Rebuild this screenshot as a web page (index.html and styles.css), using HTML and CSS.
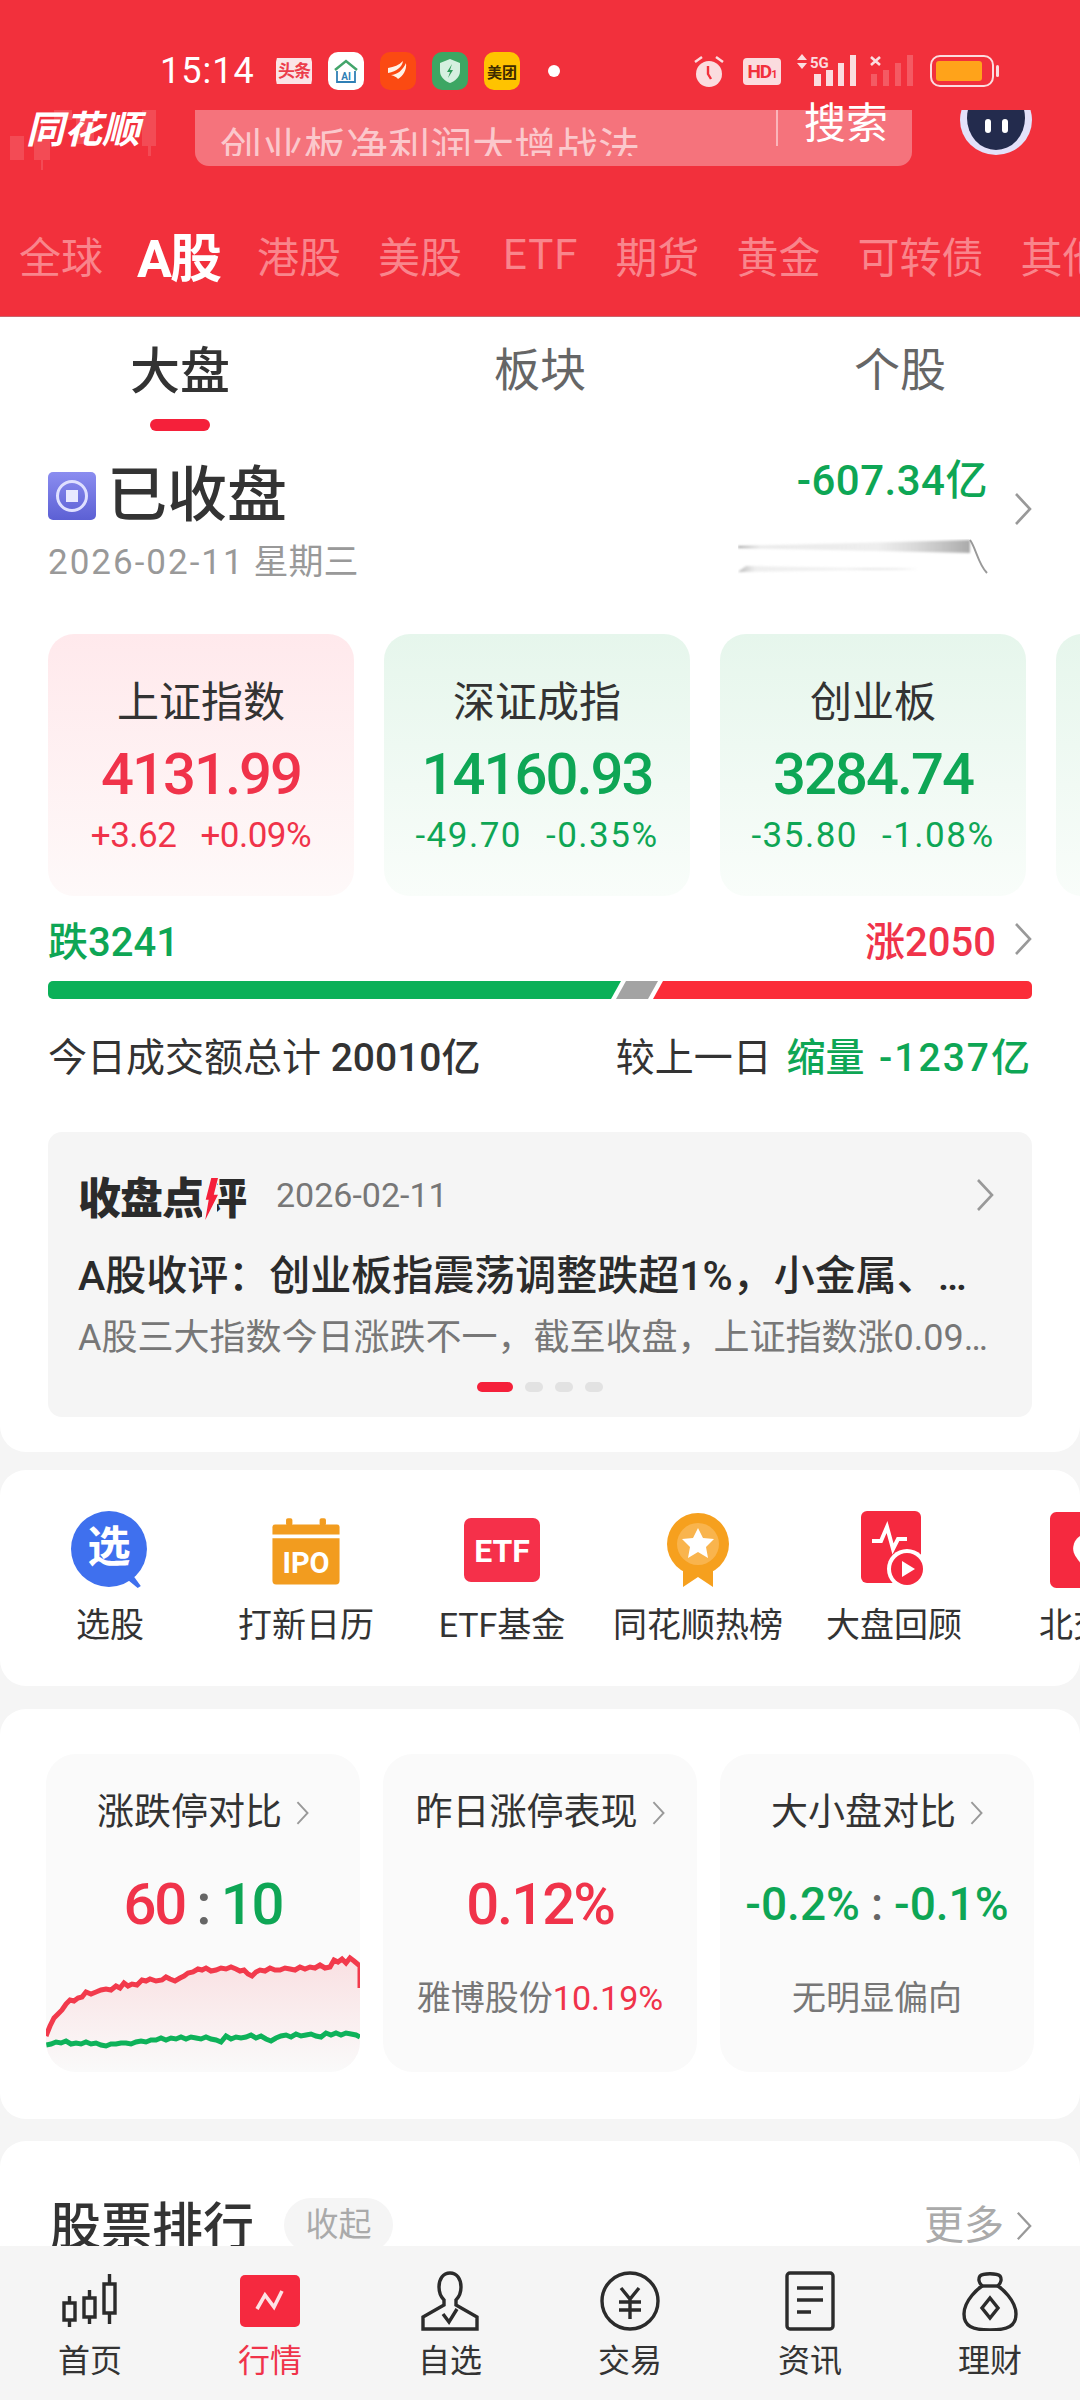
FILE: index.html
```html
<!DOCTYPE html>
<html lang="zh-CN">
<head>
  <meta charset="UTF-8">
  <meta name="viewport" content="width=device-width, initial-scale=1">
  <title>同花顺 行情</title>
  <link rel="stylesheet" href="styles.css">
</head>
<body>

<div class="content">

  <header class="header">
    <div class="status">
      <span class="time">15:14</span>
      <div class="apps">
        <span class="app app-toutiao"><i>头条</i></span>
        <span class="app app-home">
          <svg viewBox="0 0 36 36"><path d="M7 17 18 8l11 9" fill="none" stroke="#43a56b" stroke-width="2.5"/><path d="M9 18v11h18V18" fill="none" stroke="#2f7fb5" stroke-width="1.8"/><text x="18" y="27" text-anchor="middle" class="app-ai">AI</text></svg>
        </span>
        <span class="app app-flag">
          <svg viewBox="0 0 36 36"><path d="M8 15c6-1 11-3 15-7-1 6-6 10-15 12zM11 22c6 0 12-5 15-12 1 7-3 13-8 16-1-2-4-3-7-4z" fill="#fff2e6"/></svg>
        </span>
        <span class="app app-shield">
          <svg viewBox="0 0 36 36"><path d="M18 6l10 4v8c0 6-5 10-10 12-5-2-10-6-10-12v-8z" fill="#d5f0e0"/><path d="M20 11l-5 8h3l-2 6 5-8h-3z" fill="#2f9a58"/></svg>
        </span>
        <span class="app app-meituan"><i>美团</i></span>
      </div>
      <span class="dot"></span>
      <div class="sys">
        <svg class="alarm" viewBox="0 0 32 34"><path d="M2 8l7-5M30 8l-7-5" stroke="#fbdcdf" stroke-width="2.5"/><circle cx="16" cy="20" r="13" fill="#fbdcdf"/><path d="M15 12v8l3 5" fill="none" stroke="#f2303c" stroke-width="2.4"/></svg>
        <span class="hd">HD<small>1</small></span>
        <svg class="net" viewBox="0 0 60 34"><path d="M5 0l5 6H0zM5 15l5-6H0z" fill="#fbdcdf"/><rect x="17" y="20" width="7" height="12" fill="#fbdcdf"/><rect x="29" y="16" width="7" height="16" fill="#fbdcdf"/><rect x="41" y="9" width="6" height="23" fill="#fbdcdf"/><rect x="53" y="1" width="6" height="31" fill="#fbdcdf"/><text x="13" y="14" class="net-5g">5G</text></svg>
        <svg class="net2" viewBox="0 0 44 34"><path d="M1 3l9 8M10 3l-9 8" stroke="#fbdcdf" stroke-width="2.6"/><g fill="#fff" opacity=".2"><rect x="1" y="20" width="6" height="12"/><rect x="13" y="16" width="6" height="16"/><rect x="25" y="9" width="6" height="23"/><rect x="37" y="1" width="6" height="31"/></g></svg>
        <span class="battery"><b></b></span>
      </div>
    </div>

    <div class="search-row">
      <svg class="candles" viewBox="0 0 170 60"><g fill="#fff" opacity=".13"><rect x="10" y="26" width="14" height="24"/><rect x="34" y="20" width="16" height="30"/><rect x="41" y="10" width="2" height="50"/><rect x="54" y="0" width="18" height="10"/><rect x="76" y="4" width="18" height="30"/><rect x="142" y="0" width="14" height="36"/><rect x="148" y="0" width="3" height="46"/></g></svg>
      <span class="logo">同花顺</span>
      <div class="search">
        <span class="search-text">创业板净利润大增战法</span>
        <span class="search-btn">搜索</span>
      </div>
      <svg class="robot" viewBox="0 0 72 46"><ellipse cx="36" cy="10" rx="36" ry="35" fill="#e3e1fa"/><ellipse cx="36" cy="8" rx="29" ry="32" fill="#232b4d"/><rect x="25" y="9" width="6" height="14" rx="3" fill="#fff"/><rect x="42" y="9" width="6" height="14" rx="3" fill="#fff"/></svg>
    </div>

    <nav class="market-tabs">
      <span>全球</span>
      <span class="active">A股</span>
      <span>港股</span>
      <span>美股</span>
      <span class="latin">ETF</span>
      <span>期货</span>
      <span>黄金</span>
      <span>可转债</span>
      <span>其他</span>
    </nav>
  </header>

  <section class="panel panel-market">
    <div class="sub-tabs">
      <span class="sub-tab active">大盘</span>
      <span class="sub-tab">板块</span>
      <span class="sub-tab">个股</span>
    </div>

    <div class="close-row">
      <div>
        <div class="close-state">
          <span class="state-icon"><i></i></span>
          <span>已收盘</span>
        </div>
        <div class="close-date"><span class="date-num">2026-02-11</span> 星期三</div>
      </div>
      <div class="flow">
        <div class="flow-value">-607.34亿</div>
        <svg class="spark" viewBox="0 0 250 36">
          <defs>
            <linearGradient id="sparkFill"><stop offset="0" stop-color="#888" stop-opacity=".8"/><stop offset=".1" stop-color="#ccc" stop-opacity=".4"/><stop offset=".6" stop-color="#ddd" stop-opacity=".5"/><stop offset="1" stop-color="#aaa"/></linearGradient>
            <filter id="sparkBlur"><feGaussianBlur stdDeviation="1"/></filter>
          </defs>
          <g filter="url(#sparkBlur)">
            <path d="M0 7 232 1v13L0 9z" fill="url(#sparkFill)"/>
            <path d="M0 33 8 27 180 30 0 33z" fill="url(#sparkFill)" opacity=".8"/>
          </g>
          <path d="M232 1c6 8 8 24 17 33" fill="none" stroke="#999" stroke-width="2"/>
        </svg>
        <svg class="chev flow-chev" viewBox="0 0 18 34"><path d="M2 2l14 15L2 32"/></svg>
      </div>
    </div>

    <div class="index-cards">
      <div class="index-card up">
        <div class="index-name">上证指数</div>
        <div class="index-value">4131.99</div>
        <div class="index-change"><span>+3.62</span><span>+0.09%</span></div>
      </div>
      <div class="index-card down">
        <div class="index-name">深证成指</div>
        <div class="index-value">14160.93</div>
        <div class="index-change"><span>-49.70</span><span>-0.35%</span></div>
      </div>
      <div class="index-card down">
        <div class="index-name">创业板</div>
        <div class="index-value">3284.74</div>
        <div class="index-change"><span>-35.80</span><span>-1.08%</span></div>
      </div>
      <div class="index-card down"></div>
    </div>

    <div class="breadth">
      <span class="green">跌3241</span>
      <span class="breadth-right">
        <span class="red">涨2050</span>
        <svg class="chev" viewBox="0 0 18 34"><path d="M2 2l14 15L2 32"/></svg>
      </span>
    </div>
    <div class="breadth-bar">
      <span class="bar-down"></span>
      <span class="bar-flat"></span>
      <span class="bar-up"></span>
    </div>

    <div class="turnover">
      <span>今日成交额总计 <b>20010亿</b></span>
      <span class="turnover-right">较上一日 <b class="green">缩量 <span class="turnover-diff">-1237亿</span></b></span>
    </div>

    <div class="review">
      <div class="review-head">
        <span class="review-title">收盘点<em>评</em></span>
        <span class="review-date">2026-02-11</span>
        <svg class="chev" viewBox="0 0 18 34"><path d="M2 2l14 15L2 32"/></svg>
      </div>
      <div class="review-news">A股收评：创业板指震荡调整跌超1%，小金属、存储芯片走强</div>
      <div class="review-desc">A股三大指数今日涨跌不一，截至收盘，上证指数涨0.09%，深证成指跌0.35%</div>
      <div class="pager"><i class="on"></i><i></i><i></i><i></i></div>
    </div>
  </section>

  <section class="panel panel-tools">
    <div class="tool">
      <svg viewBox="0 0 76 76"><path d="M60 62l8 11-3 2-11-9z" fill="#3f70ee"/><circle cx="37" cy="37" r="37" fill="#3f70ee"/><text x="37" y="50" text-anchor="middle" class="tool-xuan">选</text></svg>
      <span>选股</span>
    </div>
    <div class="tool">
      <svg viewBox="-6 -5 88 86"><path d="M4 10h68a3 3 0 0 1 3 3v8H1v-8a3 3 0 0 1 3-3z" fill="#f29c1f"/><rect x="16" y="3" width="7" height="8" rx="2" fill="#f29c1f"/><rect x="53" y="3" width="7" height="8" rx="2" fill="#f29c1f"/><path d="M1 25h74v47a4 4 0 0 1-4 4H5a4 4 0 0 1-4-4z" fill="#f29c1f"/><text x="38" y="63" text-anchor="middle" class="tool-ipo">IPO</text></svg>
      <span>打新日历</span>
    </div>
    <div class="tool">
      <svg viewBox="-2 -7 80 78"><rect width="76" height="64" rx="7" fill="#f5304a"/><text x="38" y="44" text-anchor="middle" class="tool-etf">ETF</text></svg>
      <span>ETF基金</span>
    </div>
    <div class="tool">
      <svg viewBox="-9 -2 80 78"><path d="M16 50v24l15-10 15 10V50z" fill="#f6a01e"/><circle cx="31" cy="31" r="31" fill="#f6a01e"/><circle cx="31" cy="31" r="21" fill="#f9b44d"/><path d="M31 15l5 10 11 1-8 8 2 11-10-6-10 6 2-11-8-8 11-1z" fill="#fff"/></svg>
      <span>同花顺热榜</span>
    </div>
    <div class="tool">
      <svg viewBox="0 0 66 78"><rect width="60" height="72" rx="6" fill="#f5293f"/><path d="M11 30l9 0 6-14 6 22 5-10h9" fill="none" stroke="#fff" stroke-width="4"/><circle cx="46" cy="58" r="20" fill="#fff"/><circle cx="46" cy="58" r="16" fill="#f5293f"/><path d="M41 50l13 8-13 8z" fill="#fff"/></svg>
      <span>大盘回顾</span>
    </div>
    <div class="tool">
      <svg viewBox="0 0 76 72"><rect width="76" height="72" rx="6" fill="#f5293f"/><path d="M38 20c10 0 16 7 16 15 0 9-16 22-16 22S22 44 22 35c0-8 6-15 16-15z" fill="#fff"/></svg>
      <span>北交所</span>
    </div>
  </section>

  <section class="panel panel-compare">
    <div class="compare-card">
      <div class="compare-title">涨跌停对比<svg class="chev small" viewBox="0 0 18 34"><path d="M2 2l14 15L2 32"/></svg></div>
      <div class="compare-value"><span class="red">60</span><span class="colon">:</span><span class="green">10</span></div>
      <svg class="limit-chart" viewBox="0 0 314 120" preserveAspectRatio="none">
        <defs>
          <linearGradient id="limitFill" x1="0" y1="0" x2="0" y2="1"><stop offset="0" stop-color="#f4404f" stop-opacity=".14"/><stop offset="1" stop-color="#f4404f" stop-opacity="0"/></linearGradient>
        </defs>
        <path d="M0 84 4 74 8 66 12 62 16 58 20 52 24 48 28 49 32 46 36 45 40 40 45 42 50 40 55 38 60 37 65 38 70 34 74 36 78 31 82 34 86 32 91 33 96 28 100 29 104 27 110 29 116 28 120 25 124 27 129 29 134 26 138 24 142 21 147 20 152 17 156 18 160 16 165 19 170 18 175 16 180 17 185 15 190 17 194 19 198 18 202 22 206 24 210 20 214 18 219 19 224 16 229 18 234 18 239 16 244 17 249 18 254 15 259 17 264 15 269 16 274 13 279 16 284 15 288 8 292 10 296 7 300 11 304 6 308 9 314 14V36L314 120H0z" fill="url(#limitFill)"/>
        <path d="M0 84 4 74 8 66 12 62 16 58 20 52 24 48 28 49 32 46 36 45 40 40 45 42 50 40 55 38 60 37 65 38 70 34 74 36 78 31 82 34 86 32 91 33 96 28 100 29 104 27 110 29 116 28 120 25 124 27 129 29 134 26 138 24 142 21 147 20 152 17 156 18 160 16 165 19 170 18 175 16 180 17 185 15 190 17 194 19 198 18 202 22 206 24 210 20 214 18 219 19 224 16 229 18 234 18 239 16 244 17 249 18 254 15 259 17 264 15 269 16 274 13 279 16 284 15 288 8 292 10 296 7 300 11 304 6 308 9 314 14V36" fill="none" stroke="#f23a4c" stroke-width="5"/>
        <path d="M0 93 5 92 10 90 15 91 20 89 25 92 30 91 35 92 40 90 45 92 50 91 55 93 60 94 65 92 70 92 75 91 80 91 85 92 90 90 95 89 100 90 105 88 110 88 115 86 120 88 125 86 130 87 135 85 140 87 145 85 150 86 155 87 160 85 165 87 170 88 175 90 180 84 185 87 190 85 195 86 200 85 205 83 210 86 215 84 220 87 225 89 230 86 235 84 240 83 245 85 250 82 255 84 260 83 265 82 270 84 275 85 280 81 285 83 290 81 295 83 300 81 305 82 310 83 314 85" fill="none" stroke="#0eb25a" stroke-width="5"/>
      </svg>
    </div>
    <div class="compare-card">
      <div class="compare-title">昨日涨停表现<svg class="chev small" viewBox="0 0 18 34"><path d="M2 2l14 15L2 32"/></svg></div>
      <div class="compare-value red">0.12%</div>
      <div class="compare-note">雅博股份<span class="red">10.19%</span></div>
    </div>
    <div class="compare-card">
      <div class="compare-title">大小盘对比<svg class="chev small" viewBox="0 0 18 34"><path d="M2 2l14 15L2 32"/></svg></div>
      <div class="compare-value narrow"><span class="green">-0.2%</span><span class="colon">:</span><span class="green">-0.1%</span></div>
      <div class="compare-note">无明显偏向</div>
    </div>
  </section>

  <section class="panel panel-rank">
    <span class="rank-title">股票排行</span>
    <span class="rank-chip">收起</span>
    <span class="rank-more">更多<svg class="chev" viewBox="0 0 18 34"><path d="M2 2l14 15L2 32"/></svg></span>
  </section>

</div>

<nav class="bottom-nav">
  <div class="nav-item">
    <svg viewBox="0 0 60 60"><g fill="none" stroke="#2b2b2b" stroke-width="3.4"><path d="M4 32h11v17H4zM9.500 25v7M9.500 49v7"/><path d="M24 27h11v19H24zM29.500 19v8M29.500 46v7"/><path d="M44 13h11v29H44zM49.500 3v10M49.500 42v11"/></g></svg>
    <span>首页</span>
  </div>
  <div class="nav-item active">
    <svg viewBox="0 0 60 60"><rect y="4" width="60" height="52" rx="5" fill="#f5293f"/><path d="M17 38l8-14 9 12 8-16" fill="none" stroke="#fde2e5" stroke-width="3.6"/></svg>
    <span>行情</span>
  </div>
  <div class="nav-item">
    <svg viewBox="0 0 60 60"><g fill="none" stroke="#2b2b2b" stroke-width="3.4"><path d="M30 2c-7 0-11 6-11 14 0 7 3 11 5 13v5L3 46v12h54V46L36 34v-5c2-2 5-6 5-13 0-8-4-14-11-14z"/><path d="M23 43l6 8 8-13"/></g></svg>
    <span>自选</span>
  </div>
  <div class="nav-item">
    <svg viewBox="0 0 60 60"><g fill="none" stroke="#2b2b2b" stroke-width="3.4"><circle cx="30" cy="30" r="28"/><path d="M21 17l9 11 9-11M19 31h22M19 39h22M30 28v20"/></g></svg>
    <span>交易</span>
  </div>
  <div class="nav-item">
    <svg viewBox="0 0 60 60"><g fill="none" stroke="#2b2b2b" stroke-width="3.4"><rect x="7" y="2" width="46" height="56" rx="3"/><path d="M17 17h26M17 29h26M17 41h14"/></g></svg>
    <span>资讯</span>
  </div>
  <div class="nav-item">
    <svg viewBox="0 0 60 60"><g fill="none" stroke="#2b2b2b" stroke-width="3.4"><path d="M22 15c-3-3-4-7-2-10 3-3 17-3 20 0 2 3 1 7-2 10 3 2 18 14 18 28 0 12-8 16-26 16S4 55 4 43c0-14 15-26 18-28z"/><path d="M22 15h16"/><path d="M30 27l8 10-8 10-8-10z"/></g></svg>
    <span>理财</span>
  </div>
</nav>

</body>
</html>
```

FILE: styles.css
```css
* {
  box-sizing: border-box;
}
html, body {
  margin: 0;
  height: 2400px;
  overflow: hidden;
}
body {
  display: flex;
  flex-direction: column;
  width: 1080px;
  background: #f5f5f5;
  color: #333;
  font-family: Roboto, "Noto Sans CJK SC", sans-serif;
}
.content {
  flex: 1;
  overflow: hidden;
}
.red {
  color: #f0334a;
}
.green {
  color: #0ea655;
}

/* header */
.header {
  height: 317px;
  background: #f2303c;
  border-bottom: 1px solid #c9636b;
  overflow: hidden;
}
.status {
  display: flex;
  align-items: center;
  height: 110px;
  padding: 32px 0 0 160px;
  color: #fff;
}
.time {
  width: 116px;
  font-size: 36px;
  letter-spacing: 1px;
}
.apps {
  display: flex;
  gap: 16px;
}
.app {
  display: flex;
  align-items: center;
  justify-content: center;
  width: 36px;
  height: 38px;
  border-radius: 10px;
  overflow: hidden;
}
.app svg {
  width: 36px;
  height: 38px;
}
.app i {
  font-style: normal;
  font-size: 15px;
  font-weight: 700;
  white-space: nowrap;
}
.app-toutiao {
  color: #ec3d4a;
}
.app-toutiao i {
  width: 36px;
  background: #fbe4e6;
  font-size: 17px;
  letter-spacing: -1px;
  text-align: center;
  line-height: 26px;
}
.app-home {
  background: #fff;
}
.app-ai {
  font-size: 10px;
  font-weight: 700;
  fill: #2f7fb5;
}
.app-flag {
  background: #fb4a12;
}
.app-shield {
  background: #3da663;
}
.app-meituan {
  background: #ffc300;
  color: #3d2a00;
}
.dot {
  width: 12px;
  height: 12px;
  margin-left: 28px;
  border-radius: 50%;
  background: #fff;
}
.sys {
  display: flex;
  align-items: center;
  margin-left: 133px;
}
.alarm {
  width: 32px;
  height: 34px;
}
.hd {
  width: 38px;
  height: 27px;
  margin-left: 18px;
  border-radius: 4px;
  background: #fbdcdf;
  color: #f2303c;
  font-size: 19px;
  font-weight: 700;
  line-height: 27px;
  text-align: center;
  letter-spacing: -1px;
}
.hd small {
  font-size: 11px;
}
.net {
  width: 60px;
  height: 34px;
  margin-left: 16px;
}
.net-5g {
  font-size: 15px;
  font-weight: 700;
  fill: #fbdcdf;
}
.net2 {
  width: 44px;
  height: 34px;
  margin-left: 13px;
}
.battery {
  position: relative;
  width: 64px;
  height: 32px;
  margin-left: 16px;
  padding: 4px;
  border: 2px solid #fbdcdf;
  border-radius: 10px;
}
.battery::after {
  content: "";
  position: absolute;
  top: 8px;
  right: -7px;
  width: 3px;
  height: 12px;
  border-radius: 2px;
  background: #fbdcdf;
}
.battery b {
  display: block;
  width: 46px;
  height: 20px;
  border-radius: 3px;
  background: #ffa31a;
}

.search-row {
  position: relative;
  display: flex;
  height: 56px;
}
.candles {
  position: absolute;
  top: 0;
  left: 0;
  width: 170px;
  height: 60px;
}
.logo {
  position: relative;
  width: 195px;
  padding-left: 26px;
  color: #fff;
  font-size: 38px;
  font-style: italic;
  font-weight: 700;
  line-height: 40px;
}
.search {
  display: flex;
  justify-content: space-between;
  width: 717px;
  padding: 0 24px 0 25px;
  border-radius: 0 0 14px 14px;
  background: #f5737c;
}
.search-text {
  height: 46px;
  padding-top: 13px;
  overflow: hidden;
  color: #fbc8cc;
  font-size: 42px;
  line-height: 52px;
  white-space: nowrap;
}
.search-btn {
  height: 36px;
  padding-left: 26px;
  border-left: 2px solid #fbb5ba;
  color: #fff;
  font-size: 42px;
  line-height: 28px;
}
.robot {
  width: 72px;
  height: 46px;
  margin-left: 48px;
}

.market-tabs {
  display: flex;
  align-items: center;
  gap: 37px;
  height: 66px;
  margin-top: 55px;
  padding-left: 19px;
  color: #f9858c;
  font-size: 42px;
  white-space: nowrap;
}
.market-tabs .active {
  margin: 0 0 0 -3px;
  color: #fff;
  font-size: 52px;
  font-weight: 700;
  letter-spacing: -2px;
}
.market-tabs .latin {
  margin-left: 4px;
  letter-spacing: 1px;
}

/* panels */
.panel {
  background: #fff;
  border-radius: 26px;
}
.panel-market {
  height: 1135px;
  border-radius: 0 0 26px 26px;
  overflow: hidden;
}
.sub-tabs {
  display: grid;
  grid-template-columns: repeat(3, 360px);
  height: 115px;
  text-align: center;
}
.sub-tab {
  position: relative;
  padding-top: 19px;
  color: #666;
  font-size: 46px;
  line-height: 68px;
}
.sub-tab.active {
  padding-top: 21px;
  color: #333;
  font-size: 50px;
  font-weight: 500;
}
.sub-tab.active::after {
  content: "";
  position: absolute;
  left: 150px;
  bottom: 1px;
  width: 60px;
  height: 12px;
  border-radius: 6px;
  background: #f5203a;
}

.close-row {
  display: flex;
  justify-content: space-between;
  height: 202px;
  padding: 24px 48px 0;
}
.close-state {
  display: flex;
  align-items: center;
  gap: 11px;
  color: #333;
  font-size: 60px;
  font-weight: 500;
  line-height: 80px;
}
.state-icon {
  display: flex;
  align-items: center;
  justify-content: center;
  width: 48px;
  height: 48px;
  border-radius: 5px;
  background: linear-gradient(#8b8df0, #5c60d4);
}
.state-icon i {
  width: 32px;
  height: 32px;
  border: 3px solid #dfe0ff;
  border-radius: 50%;
  background: linear-gradient(#e8e9ff, #e8e9ff) center / 12px 12px no-repeat;
}
.close-date {
  margin-top: 5px;
  color: #999;
  font-size: 35px;
  line-height: 44px;
}
.date-num {
  letter-spacing: 2px;
}
.flow {
  position: relative;
  width: 294px;
  padding-right: 44px;
  text-align: right;
}
.flow-value {
  color: #0ea655;
  font-size: 42px;
  font-weight: 500;
  line-height: 50px;
  letter-spacing: .5px;
}
.spark {
  display: block;
  width: 250px;
  height: 36px;
  margin-top: 33px;
}
.chev {
  width: 18px;
  height: 34px;
  flex: none;
}
.chev path {
  fill: none;
  stroke: #999;
  stroke-width: 2.6;
}
.flow-chev {
  position: absolute;
  top: 36px;
  right: 0;
}

.index-cards {
  display: flex;
  gap: 30px;
  padding-left: 48px;
}
.index-card {
  flex: none;
  width: 306px;
  height: 262px;
  padding-top: 42px;
  border-radius: 26px;
  text-align: center;
}
.index-card.up {
  background: linear-gradient(#ffe9ec, #fef9f9);
  color: #f0334a;
}
.index-card.down {
  background: linear-gradient(#e6f6ec, #f9fdfa);
  color: #0ea655;
}
.index-name {
  color: #333;
  font-size: 42px;
  line-height: 54px;
}
.index-value {
  margin-top: 8px;
  font-size: 58px;
  font-weight: 500;
  line-height: 72px;
  letter-spacing: -2px;
}
.index-change {
  display: flex;
  justify-content: center;
  gap: 24px;
  margin-top: 2px;
  font-size: 35px;
  line-height: 48px;
  letter-spacing: -.5px;
}
.index-card.down .index-change {
  letter-spacing: 1.5px;
}

.breadth {
  display: flex;
  justify-content: space-between;
  align-items: center;
  height: 50px;
  margin-top: 18px;
  padding: 0 48px;
  font-size: 40px;
  font-weight: 500;
}
.breadth-right {
  display: flex;
  align-items: center;
  gap: 18px;
}
.breadth-bar {
  display: flex;
  height: 18px;
  margin: 17px 48px 0;
  border-radius: 5px;
  overflow: hidden;
}
.bar-down {
  width: 573px;
  background: #0bb058;
  clip-path: polygon(0 0, 100% 0, calc(100% - 10px) 100%, 0 100%);
}
.bar-flat {
  width: 42px;
  margin-left: -5px;
  background: #a3a3a3;
  clip-path: polygon(10px 0, 100% 0, calc(100% - 10px) 100%, 0 100%);
}
.bar-up {
  flex: 1;
  margin-left: -5px;
  background: #fb2c38;
  clip-path: polygon(10px 0, 100% 0, 100% 100%, 0 100%);
}
.turnover {
  display: flex;
  justify-content: space-between;
  height: 60px;
  margin-top: 29px;
  padding: 0 48px;
  font-size: 39px;
  line-height: 60px;
  white-space: nowrap;
}
.turnover b {
  font-weight: 500;
}
.turnover b.green {
  color: #0ea655;
}
.turnover-right {
  word-spacing: 5px;
}
.turnover-diff {
  letter-spacing: 2px;
}

.review {
  height: 285px;
  margin: 44px 48px 0;
  padding: 28px 30px 0;
  border-radius: 14px;
  background: #f5f5f5;
}
.review-head {
  display: flex;
  align-items: center;
  height: 70px;
}
.review-title {
  color: #2b2b2b;
  font-size: 43px;
  font-weight: 900;
  letter-spacing: -1px;
}
.review-title em {
  position: relative;
  font-style: normal;
}
/* lightning replaces the left radical of the last glyph */
.review-title em::before {
  content: "";
  position: absolute;
  top: 2px;
  left: -2px;
  width: 15px;
  height: 46px;
  background: #f5f5f5;
}
.review-title em::after {
  content: "";
  position: absolute;
  top: 4px;
  left: -1px;
  width: 15px;
  height: 42px;
  background: #f5203a;
  clip-path: polygon(55% 0, 100% 0, 72% 40%, 100% 40%, 15% 100%, 38% 52%, 18% 52%);
}
.review-date {
  flex: 1;
  margin-left: 30px;
  color: #777;
  font-size: 34px;
}
.review-head .chev {
  margin-right: 8px;
}
.review-news {
  overflow: hidden;
  margin-top: 18px;
  color: #2b2b2b;
  font-size: 41px;
  font-weight: 500;
  line-height: 56px;
  white-space: nowrap;
  text-overflow: ellipsis;
}
.review-desc {
  overflow: hidden;
  margin-top: 8px;
  color: #777;
  font-size: 36px;
  line-height: 52px;
  white-space: nowrap;
  text-overflow: ellipsis;
}
.pager {
  display: flex;
  justify-content: center;
  gap: 12px;
  margin-top: 18px;
}
.pager i {
  width: 18px;
  height: 10px;
  border-radius: 5px;
  background: #e2e2e2;
}
.pager .on {
  width: 36px;
  background: #f5203a;
}

.panel-tools {
  display: flex;
  height: 216px;
  margin-top: 18px;
  padding: 41px 0 0 12px;
  overflow: hidden;
}
.tool {
  display: flex;
  flex: none;
  flex-direction: column;
  align-items: center;
  width: 196px;
  color: #333;
  font-size: 34px;
  white-space: nowrap;
}
.tool svg {
  width: 80px;
  height: 78px;
}
.tool span {
  margin-top: 13px;
  line-height: 46px;
}
.tool-xuan {
  font-size: 42px;
  font-weight: 700;
  fill: #fff;
}
.tool-ipo {
  font-size: 32px;
  font-weight: 700;
  fill: #fff;
}
.tool-etf {
  font-size: 32px;
  font-weight: 700;
  fill: #fff;
}

.panel-compare {
  display: flex;
  justify-content: space-between;
  height: 410px;
  margin-top: 23px;
  padding: 45px 46px 0;
}
.compare-card {
  position: relative;
  width: 314px;
  height: 318px;
  overflow: hidden;
  border-radius: 30px;
  background: #fafafa;
  text-align: center;
}
.compare-title {
  display: flex;
  align-items: center;
  justify-content: center;
  gap: 14px;
  padding-top: 35px;
  color: #333;
  font-size: 37px;
  line-height: 48px;
  white-space: nowrap;
}
.chev.small {
  width: 13px;
  height: 26px;
}
.compare-value {
  margin-top: 32px;
  font-size: 58px;
  font-weight: 500;
  line-height: 70px;
  letter-spacing: -2px;
}
.compare-value.narrow {
  font-size: 46px;
  letter-spacing: 0;
}
.colon {
  margin: 0 11px;
  color: #666;
}
.compare-note {
  margin-top: 36px;
  color: #777;
  font-size: 34px;
  line-height: 46px;
  white-space: nowrap;
}
.limit-chart {
  position: absolute;
  left: 0;
  bottom: 0;
  width: 314px;
  height: 120px;
}

.panel-rank {
  display: flex;
  align-items: flex-start;
  height: 200px;
  margin-top: 22px;
  padding: 52px 48px 0 50px;
}
.rank-title {
  color: #333;
  font-size: 51px;
  font-weight: 500;
  line-height: 70px;
}
.rank-chip {
  width: 109px;
  height: 54px;
  margin: 5px 0 0 30px;
  border-radius: 27px;
  background: #f5f5f5;
  color: #aaa;
  font-size: 33px;
  line-height: 54px;
  text-align: center;
}
.rank-more {
  display: flex;
  align-items: center;
  gap: 12px;
  margin-top: 3px;
  margin-left: auto;
  color: #aaa;
  font-size: 40px;
  line-height: 60px;
}
.rank-more .chev {
  width: 16px;
  height: 30px;
}

/* bottom nav */
.bottom-nav {
  display: grid;
  flex: none;
  grid-template-columns: repeat(6, 180px);
  height: 154px;
  background: #f5f5f5;
}
.nav-item {
  display: flex;
  flex-direction: column;
  align-items: center;
  padding-top: 25px;
  color: #333;
  font-size: 32px;
}
.nav-item svg {
  width: 60px;
  height: 60px;
}
.nav-item span {
  margin-top: 8px;
  line-height: 44px;
}
.nav-item.active {
  color: #f0334a;
}
```
